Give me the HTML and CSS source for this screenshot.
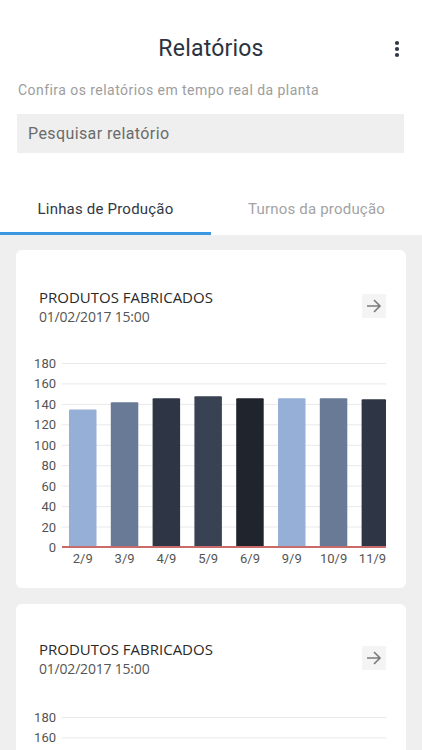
FILE: index.html
```html
<!DOCTYPE html>
<html lang="pt">
<head>
<meta charset="utf-8">
<title>Relatórios</title>
<link rel="stylesheet" href="styles.css">
</head>
<body>
<header class="topbar">
  <span></span>
  <h1 class="title">Relatórios</h1>
  <button class="menu" aria-label="Mais opções">
    <svg width="6" height="18" viewBox="0 0 6 18"><circle cx="3" cy="3" r="2.1" fill="#2f3845"/><circle cx="3" cy="9" r="2.1" fill="#2f3845"/><circle cx="3" cy="15" r="2.1" fill="#2f3845"/></svg>
  </button>
</header>
<p class="subtitle">Confira os relatórios em tempo real da planta</p>
<div class="search">Pesquisar relatório</div>
<nav class="tabs">
  <div class="tab active">Linhas de Produção</div>
  <div class="tab">Turnos da produção</div>
</nav>
<main class="feed">
  <section class="card">
    <div class="card-head">
      <div>
        <div class="card-title">PRODUTOS FABRICADOS</div>
        <div class="card-date">01/02/2017 15:00</div>
      </div>
      <button class="go" aria-label="Abrir">
        <svg width="16" height="14" viewBox="0 0 16 14"><path d="M1 7h13M8 1l6 6-6 6" fill="none" stroke="#7a7a7a" stroke-width="1.6"/></svg>
      </button>
    </div>
    <svg class="chart" width="390" height="222" viewBox="0 0 390 222">
      <g stroke="#e9e9e9" stroke-width="1">
        <line x1="46" x2="370" y1="13.5" y2="13.5"/>
        <line x1="46" x2="370" y1="33.9" y2="33.9"/>
        <line x1="46" x2="370" y1="54.4" y2="54.4"/>
        <line x1="46" x2="370" y1="74.8" y2="74.8"/>
        <line x1="46" x2="370" y1="95.3" y2="95.3"/>
        <line x1="46" x2="370" y1="115.7" y2="115.7"/>
        <line x1="46" x2="370" y1="136.1" y2="136.1"/>
        <line x1="46" x2="370" y1="156.6" y2="156.6"/>
        <line x1="46" x2="370" y1="177" y2="177"/>
      </g>
      <g class="ylab" text-anchor="end">
        <text x="40" y="13.5">180</text>
        <text x="40" y="33.9">160</text>
        <text x="40" y="54.4">140</text>
        <text x="40" y="74.8">120</text>
        <text x="40" y="95.3">100</text>
        <text x="40" y="115.7">80</text>
        <text x="40" y="136.1">60</text>
        <text x="40" y="156.6">40</text>
        <text x="40" y="177">20</text>
        <text x="40" y="197.4">0</text>
      </g>
      <g>
        <rect x="53" y="59.4" width="27.5" height="138" rx="1" fill="#95afd6"/>
        <rect x="94.8" y="52.3" width="27.5" height="145" rx="1" fill="#687a96"/>
        <rect x="136.6" y="48.2" width="27.5" height="149" rx="1" fill="#2e3646"/>
        <rect x="178.4" y="46.2" width="27.5" height="151" rx="1" fill="#394252"/>
        <rect x="220.2" y="48.2" width="27.5" height="149" rx="1" fill="#1f242d"/>
        <rect x="262" y="48.2" width="27.5" height="149" rx="1" fill="#95afd6"/>
        <rect x="303.8" y="48.2" width="27.5" height="149" rx="1" fill="#687a96"/>
        <rect x="345.6" y="49.3" width="24.4" height="148" rx="1" fill="#2e3646"/>
      </g>
      <line x1="46" x2="370" y1="197" y2="197" stroke="#c96b6b" stroke-width="2"/>
      <g class="xlab" text-anchor="middle">
        <text x="66.8" y="208">2/9</text>
        <text x="108.6" y="208">3/9</text>
        <text x="150.4" y="208">4/9</text>
        <text x="192.2" y="208">5/9</text>
        <text x="234" y="208">6/9</text>
        <text x="275.8" y="208">9/9</text>
        <text x="317.6" y="208">10/9</text>
        <text x="356.5" y="208">11/9</text>
      </g>
    </svg>
  </section>
  <section class="card card-next">
    <div class="card-head">
      <div>
        <div class="card-title">PRODUTOS FABRICADOS</div>
        <div class="card-date">01/02/2017 15:00</div>
      </div>
      <button class="go" aria-label="Abrir">
        <svg width="16" height="14" viewBox="0 0 16 14"><path d="M1 7h13M8 1l6 6-6 6" fill="none" stroke="#7a7a7a" stroke-width="1.6"/></svg>
      </button>
    </div>
    <svg class="chart" width="390" height="222" viewBox="0 0 390 222">
      <g stroke="#e9e9e9" stroke-width="1">
        <line x1="46" x2="370" y1="13.5" y2="13.5"/>
        <line x1="46" x2="370" y1="33.9" y2="33.9"/>
        <line x1="46" x2="370" y1="54.4" y2="54.4"/>
        <line x1="46" x2="370" y1="74.8" y2="74.8"/>
      </g>
      <g class="ylab" text-anchor="end">
        <text x="40" y="13.5">180</text>
        <text x="40" y="33.9">160</text>
        <text x="40" y="54.4">140</text>
        <text x="40" y="74.8">120</text>
      </g>
    </svg>
  </section>
</main>
</body>
</html>
```
FILE: styles.css
```css
* { box-sizing: border-box; }
html, body { margin: 0; padding: 0; background: #ffffff; overflow: hidden; }
body { font-family: Roboto, "Liberation Sans", sans-serif; color: #2f3845; }

.topbar {
  display: grid;
  grid-template-columns: 1fr auto 1fr;
  align-items: center;
  padding-top: 35px;
}
.title {
  margin: 0;
  font-size: 23px;
  line-height: 28px;
  font-weight: 400;
  letter-spacing: 0.2px;
  color: #2b3340;
}
.menu {
  justify-self: end;
  margin-right: 22px;
  border: 0;
  background: none;
  padding: 0;
  display: flex;
}

.subtitle {
  margin: 18px 0 0 18px;
  font-size: 14px;
  line-height: 18px;
  letter-spacing: 0.45px;
  color: #9d9d9d;
}

.search {
  margin: 15px 18px 0 17px;
  height: 39px;
  background: #efefef;
  padding-left: 11px;
  display: flex;
  align-items: center;
  font-size: 16px;
  letter-spacing: 0.4px;
  color: #6b6b6b;
}

.tabs {
  margin-top: 32px;
  display: grid;
  grid-template-columns: 1fr 1fr;
}
.tab {
  padding: 14px 0 13px;
  line-height: 20px;
  font-size: 15px;
  letter-spacing: 0.2px;
  text-align: center;
  color: #a3a3a3;
  border-bottom: 3px solid transparent;
}
.tab.active {
  color: #2f3845;
  border-bottom-color: #3a97e0;
}

.feed {
  background: #efefef;
  padding: 15px 16px 16px;
  display: flex;
  flex-direction: column;
  gap: 16px;
}
.card {
  background: #ffffff;
  border-radius: 6px;
  padding-top: 37px;
  padding-bottom: 16px;
}
.card-next { padding-top: 35px; }
.card-head {
  display: flex;
  justify-content: space-between;
  align-items: flex-start;
  padding: 0 20px 0 23px;
}
.card-title {
  font-family: "Open Sans", sans-serif;
  font-size: 15px;
  line-height: 20px;
  color: #2a2a2a;
}
.card-date {
  font-family: "Open Sans", sans-serif;
  font-size: 14px;
  line-height: 20px;
  color: #555555;
  letter-spacing: -0.2px;
}
.go {
  margin-top: 7px;
  width: 24px;
  height: 24px;
  border: 0;
  padding: 0;
  background: #f4f4f4;
  display: flex;
  align-items: center;
  justify-content: center;
}
.chart {
  display: block;
  margin-top: 23px;
}
.card-next .chart { margin-top: 25px; }
.ylab text, .xlab text {
  font-family: Roboto, "Liberation Sans", sans-serif;
  font-size: 13px;
  fill: #555555;
}
.ylab text { dominant-baseline: central; }
.xlab text { dominant-baseline: central; }
```
